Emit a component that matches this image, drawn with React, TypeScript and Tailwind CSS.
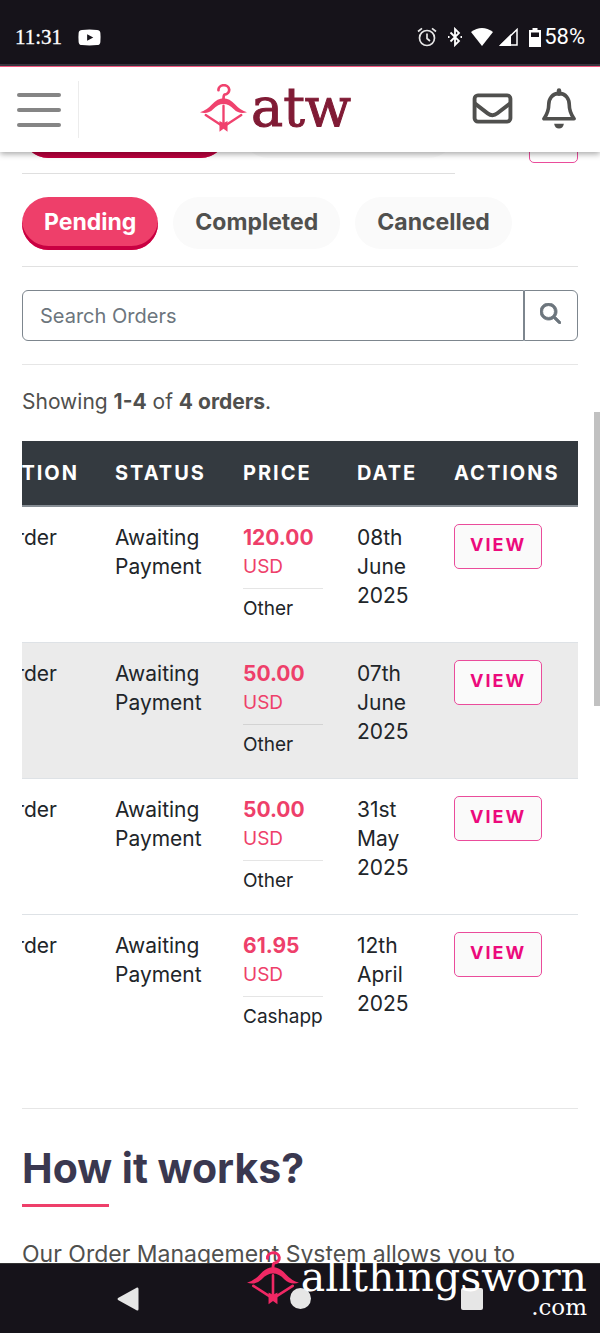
import React from "react";
import { FaMagnifyingGlass } from "react-icons/fa6";

type Order = { amount: string; method: string; date: string[]; highlighted?: boolean };

const orders: Order[] = [
  { amount: "120.00", method: "Other", date: ["08th", "June", "2025"] },
  { amount: "50.00", method: "Other", date: ["07th", "June", "2025"], highlighted: true },
  { amount: "50.00", method: "Other", date: ["31st", "May", "2025"] },
  { amount: "61.95", method: "Cashapp", date: ["12th", "April", "2025"] },
];

function HangerBow({ className }: { className: string }) {
  return (
    <svg viewBox="0 0 140 142" className={className} aria-hidden="true">
      <path d="M55 18A16 14 0 1 1 73 31Q70 33 70 46" fill="none" stroke="currentColor" strokeWidth="8" strokeLinecap="round" />
      <path d="M0 84Q20 78 36 60Q52 42 70 42Q88 42 104 60Q120 78 140 84Q117 91 101 75Q86 59 70 59Q54 59 39 75Q23 91 0 84Z" fill="currentColor" />
      <path d="M17 92L60 120M123 92L80 120M70 64V122" fill="none" stroke="currentColor" strokeWidth="7" strokeLinecap="round" />
      <path d="M58 110L70 116L82 110V142L70 133L58 142Z" fill="currentColor" />
    </svg>
  );
}

function StatusBar() {
  return (
    <div className="flex h-[66px] shrink-0 items-center justify-between border-b-2 border-[#3b3742] bg-[#16131a] px-[15px] pt-2.5 text-white">
      <div className="flex items-center gap-4">
        <span className="font-['Liberation_Serif',serif] text-[21px] leading-6 [-webkit-text-stroke:0.3px_white]">11:31</span>
        <svg viewBox="0 0 24 18" className="h-[17px] w-[23px]" aria-hidden="true">
          <path d="M4 1Q12 0 20 1Q23 1 23.500 4Q24 9 23.500 14Q23 17 20 17Q12 18 4 17Q1 17 .5 14Q0 9 .5 4Q1 1 4 1Z" fill="white" />
          <path d="M9.500 5.500V12.500L16 9Z" fill="#16131a" />
        </svg>
      </div>
      <div className="flex items-center">
        <svg viewBox="0 0 20 20" className="mr-2.5 size-5" fill="none" stroke="#e6e6e6" strokeWidth="1.700" aria-hidden="true">
          <circle cx="10" cy="11" r="7.500" />
          <path d="M10 6.500V11.500L13 14M1 4.500L5 1.300M19 4.500L15 1.300" />
        </svg>
        <svg viewBox="0 0 16 20" className="mr-2 h-5 w-4" fill="none" stroke="white" strokeWidth="1.800" aria-hidden="true">
          <path d="M3.500 5.500L12 14L8 18V2L12 6L3.500 14.500" />
          <path d="M1 10H2.500M13.500 10H15" strokeWidth="2.200" />
        </svg>
        <svg viewBox="0 0 22 18" className="mr-1.5 h-[18px] w-[22px]" aria-hidden="true">
          <path d="M0 4Q11 -4 22 4L11 18Z" fill="white" />
        </svg>
        <svg viewBox="0 0 19 18" className="mr-[11px] h-[18px] w-[19px]" aria-hidden="true">
          <path d="M18 1.500V17H2Z" fill="none" stroke="white" strokeWidth="1.500" />
          <path d="M0 18L12 6V18Z" fill="white" />
        </svg>
        <svg viewBox="0 0 12 19" className="mr-[3px] h-[19px] w-3" aria-hidden="true">
          <path fillRule="evenodd" d="M3.500 0H8.500V2H12V19H0V2H3.500ZM2 4.500V9H10V4.500Z" fill="white" />
        </svg>
        <span className="font-[Roboto,sans-serif] text-[22px] leading-6">58%</span>
      </div>
    </div>
  );
}

function Header() {
  return (
    <header className="relative z-10 grid h-[86px] shrink-0 grid-cols-[79px_1fr_128px] items-center border-t border-[#f4577f] bg-white shadow-[0_2px_6px_rgba(0,0,0,0.35)]">
      <div className="flex h-[57px] items-center border-r border-[#ececec] pl-[17px]">
        <button type="button" aria-label="Menu" className="flex w-11 flex-col gap-[11px]">
          <span className="h-1 rounded-full bg-[#858585]" />
          <span className="h-1 rounded-full bg-[#858585]" />
          <span className="h-1 rounded-full bg-[#858585]" />
        </button>
      </div>
      <a href="#home" className="flex items-center justify-center gap-1 pb-1">
        <HangerBow className="h-12 w-[47px] text-[#f0426e]" />
        <span className="font-['DejaVu_Serif',serif] text-[54px] leading-[56px] text-[#801b35] [-webkit-text-stroke:1px_#801b35]">atw</span>
      </a>
      <div className="flex items-center gap-7 pb-[3px] text-[#50504e]">
        <button type="button" aria-label="Messages">
          <svg viewBox="0 0 42 32" className="h-[31px] w-[41px]" fill="none" stroke="currentColor" strokeWidth="4">
            <rect x="2.500" y="2.500" width="37" height="27" rx="3.500" />
            <path d="M3 11L16 21Q21 25 26 21L39 11" />
          </svg>
        </button>
        <button type="button" aria-label="Notifications">
          <svg viewBox="0 0 36 42" className="h-[41px] w-9" fill="none" stroke="currentColor" strokeWidth="3.700">
            <path d="M18 5.500C11 5.500 7.500 11 7.500 17C7.500 25 5 28 2.500 31.500H33.500C31 28 28.500 25 28.500 17C28.500 11 25 5.500 18 5.500Z" strokeLinejoin="round" />
            <path d="M18 2.500V6" strokeWidth="4.500" strokeLinecap="round" />
            <path d="M13 36.500H23Q22 41.500 18 41.500Q14 41.500 13 36.500Z" fill="currentColor" stroke="none" />
          </svg>
        </button>
      </div>
    </header>
  );
}

function Tab({ label, active = false }: { label: string; active?: boolean }) {
  return (
    <button
      type="button"
      className={
        active
          ? "h-[53px] rounded-full bg-[#ee3f6a] px-[22px] pb-1 text-white shadow-[inset_0_-4px_0_#c90042]"
          : "h-[52px] rounded-full bg-[#fafafa] px-[22px] pb-[3px]"
      }
    >
      {label}
    </button>
  );
}

function OrdersTable() {
  return (
    <div className="mt-6 flex justify-end overflow-hidden">
      <table className="shrink-0 border-collapse text-left text-[21px] leading-[29px] text-[#212529]">
        <thead>
          <tr className="h-[65px] border-b-2 border-[#868d94] bg-[#343a40] text-[20px] tracking-[2px] text-white">
            <th className="min-w-[186px] px-[18px]">DESCRIPTION</th>
            <th className="w-32 px-[18px]">STATUS</th>
            <th className="w-[114px] pl-[18px]">PRICE</th>
            <th className="w-[97px] pl-[18px]">DATE</th>
            <th className="w-[142px] pl-[18px]">ACTIONS</th>
          </tr>
        </thead>
        <tbody>
          {orders.map((order, i) => (
            <tr
              key={i}
              className={
                order.highlighted
                  ? "h-[136px] border-[#dee2e6] bg-[#ebebeb] align-top not-first:border-t"
                  : "h-[136px] border-[#dee2e6] align-top not-first:border-t"
              }
            >
              <td className="py-4 pr-10 text-right whitespace-nowrap">Custom Order</td>
              <td className="px-[18px] py-4">
                Awaiting
                <br />
                Payment
              </td>
              <td className="py-4 pr-4 pl-[18px]">
                <div className="text-[#ee3f6a]">
                  <strong className="block font-bold">{order.amount}</strong>
                  <span className="block text-[19px]">USD</span>
                </div>
                <div className="mt-[7px] border-t border-black/10 pt-[5px] text-[19px]">{order.method}</div>
              </td>
              <td className="py-4 pl-[18px]">
                {order.date.map((part) => (
                  <span key={part} className="block">{part}</span>
                ))}
              </td>
              <td className="py-[17px] pl-[18px]">
                <button type="button" className="block h-[45px] rounded-[5px] border border-[#ea4c9b] bg-[#fafafa] px-[15px] pb-1 text-[18px] font-bold tracking-[2px] text-[#ec0a7c]">
                  VIEW
                </button>
              </td>
            </tr>
          ))}
        </tbody>
      </table>
    </div>
  );
}

export default function App() {
  return (
    <div className="relative flex h-screen flex-col overflow-hidden bg-white font-[Inter,sans-serif] text-[#50504e]">
      <StatusBar />
      <Header />
      <main className="relative min-h-0 flex-1 overflow-hidden px-[22px]">
        <div className="-mt-[47px] flex items-start justify-between">
          <div className="flex w-[433px] gap-[15px] border-b border-[#dfdfdf] pb-[15px]">
            <button type="button" aria-label="Purchases" className="h-[53px] w-[205px] rounded-full bg-[#ee3f6a] shadow-[inset_0_-6px_0_#bd003e]" />
            <button type="button" aria-label="Sales" className="h-[53px] flex-1 rounded-full bg-[#fafafa]" />
          </div>
          <button type="button" aria-label="Filter" className="mt-[13px] h-[45px] w-[49px] rounded-[5px] border border-[#ea4c9b]" />
        </div>

        <div className="mt-[23px] flex gap-[15px] border-b border-[#e1e1e1] pb-4 text-[23px] leading-8 font-bold">
          <Tab label="Pending" active />
          <Tab label="Completed" />
          <Tab label="Cancelled" />
        </div>

        <form className="mt-[23px] flex h-[51px]" onSubmit={(e) => e.preventDefault()}>
          <input
            type="search"
            aria-label="Search Orders"
            placeholder="Search Orders"
            className="min-w-0 flex-1 rounded-l-[6px] border border-[#7d868e] px-[17px] text-[20px] placeholder:text-[#6c757d]"
          />
          <button type="submit" aria-label="Search" className="flex w-[54px] items-center justify-center rounded-r-[6px] border border-[#7d868e] pr-0.5 pb-1 text-[#6c757d]">
            <FaMagnifyingGlass className="size-[21px]" strokeWidth={20} stroke="currentColor" />
          </button>
        </form>

        <hr className="mt-[23px] border-[#e6e6e6]" />
        <p className="mt-[22px] text-[21px] leading-[30px]">
          Showing <strong>1-4</strong> of <strong>4 orders</strong>.
        </p>

        <OrdersTable />

        <hr className="mt-[58px] border-[#e6e6e6]" />
        <h2 className="mt-[35px] text-[41px] leading-[48px] font-bold text-[#3a3850]">How it works?</h2>
        <div className="mt-3 h-[3px] w-[87px] bg-[#ee3f6a]" />
        <p className="mt-8 text-[23px] leading-[31px] whitespace-nowrap">Our Order Management System allows you to</p>
      </main>

      <nav className="grid h-[70px] shrink-0 grid-cols-3 items-center border-t border-[#333] bg-[#16131a] px-[42px]">
        <button type="button" aria-label="Back" className="justify-self-center">
          <svg viewBox="0 0 22 24" className="h-6 w-[22px]" fill="#e6e6e6">
            <path d="M20 .5Q21.500 0 21.500 2V22Q21.500 24 20 23.500L1 13Q0 12 1 11Z" />
          </svg>
        </button>
        <button type="button" aria-label="Home" className="size-[21px] justify-self-center rounded-full bg-[#e6e6e6]" />
        <button type="button" aria-label="Recent apps" className="size-[22px] justify-self-center rounded-[2px] bg-[#e6e6e6]" />
      </nav>

      <div className="pointer-events-none absolute right-[13px] bottom-4 flex items-start gap-0.5">
        <HangerBow className="h-[54px] w-[52px] text-[#f02864]" />
        <div className="flex flex-col items-end pt-1.5 font-['DejaVu_Serif',serif] text-white">
          <span className="text-[41px] leading-10">allthingsworn</span>
          <span className="text-[23px] leading-5">.com</span>
        </div>
      </div>

      <div className="absolute top-[412px] right-0 h-[294px] w-1.5 bg-[#c1c1c1]" />
    </div>
  );
}
